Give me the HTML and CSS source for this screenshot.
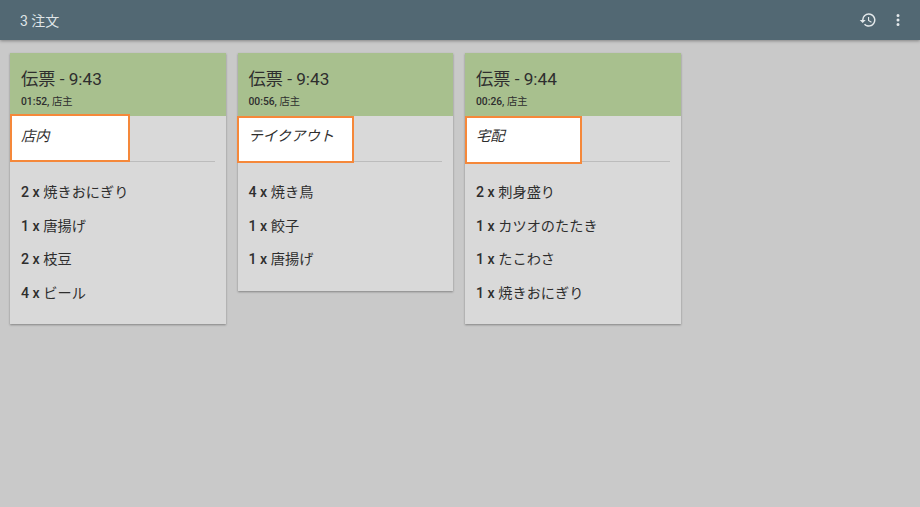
FILE: index.html
```html
<!DOCTYPE html>
<html lang="ja">
<head>
<meta charset="utf-8">
<title>3 注文</title>
<link rel="stylesheet" href="styles.css">
</head>
<body>
<header class="toolbar">
  <div class="title">3 注文</div>
  <div class="actions">
    <svg class="icon" viewBox="0 0 24 24"><path d="M13 3a9 9 0 0 0-9 9H1l3.89 3.89.07.14L9 12H6a7 7 0 1 1 2.05 4.95l-1.42 1.42A9 9 0 1 0 13 3zm-1 5v5l4.28 2.54.72-1.21-3.5-2.08V8H12z"/></svg>
    <svg class="icon" viewBox="0 0 24 24"><path d="M12 8a2 2 0 1 0 0-4 2 2 0 0 0 0 4zm0 2a2 2 0 1 0 0 4 2 2 0 0 0 0-4zm0 6a2 2 0 1 0 0 4 2 2 0 0 0 0-4z"/></svg>
  </div>
</header>
<main class="board">
  <article class="card">
    <div class="card-head">
      <div class="ticket">伝票 - 9:43</div>
      <div class="meta"><b>01:52,</b> 店主</div>
    </div>
    <div class="type">
      <div class="type-box type-box-a">店内</div>
    </div>
    <ul class="items">
      <li><b>2 x</b> 焼きおにぎり</li>
      <li><b>1 x</b> 唐揚げ</li>
      <li><b>2 x</b> 枝豆</li>
      <li><b>4 x</b> ビール</li>
    </ul>
  </article>
  <article class="card">
    <div class="card-head">
      <div class="ticket">伝票 - 9:43</div>
      <div class="meta"><b>00:56,</b> 店主</div>
    </div>
    <div class="type">
      <div class="type-box type-box-b">テイクアウト</div>
    </div>
    <ul class="items">
      <li><b>4 x</b> 焼き鳥</li>
      <li><b>1 x</b> 餃子</li>
      <li><b>1 x</b> 唐揚げ</li>
    </ul>
  </article>
  <article class="card">
    <div class="card-head">
      <div class="ticket">伝票 - 9:44</div>
      <div class="meta"><b>00:26,</b> 店主</div>
    </div>
    <div class="type">
      <div class="type-box type-box-c">宅配</div>
    </div>
    <ul class="items">
      <li><b>2 x</b> 刺身盛り</li>
      <li><b>1 x</b> カツオのたたき</li>
      <li><b>1 x</b> たこわさ</li>
      <li><b>1 x</b> 焼きおにぎり</li>
    </ul>
  </article>
</main>
</body>
</html>
```
FILE: styles.css
```css
* { box-sizing: border-box; }
html, body { height: 100%; }
body {
  margin: 0;
  overflow: hidden;
  background: #c9c9c9;
  color: #2e2e2e;
  font-family: Roboto, "Noto Sans CJK JP", sans-serif;
}
.toolbar {
  height: 40px;
  display: flex;
  align-items: center;
  justify-content: space-between;
  padding: 0 13px 0 20px;
  background: #526873;
  box-shadow: 0 1px 3px rgba(0, 0, 0, .35);
}
.title {
  color: #dfe4e7;
  font-size: 14px;
  font-weight: 400;
}
.actions {
  display: flex;
  align-items: center;
  gap: 12px;
}
.icon {
  width: 18px;
  height: 18px;
  fill: #e4e9eb;
}
.board {
  display: flex;
  align-items: flex-start;
  gap: 12px;
  padding: 13px 10px;
}
.card {
  width: 215.5px;
  background: #d9d9d9;
  box-shadow: 0 1px 2px rgba(0, 0, 0, .35);
}
.card-head {
  height: 63px;
  padding: 15px 11px 0;
  background: #a8c08e;
}
.ticket {
  font-size: 17.2px;
  line-height: 22px;
}
.meta {
  margin-top: 5px;
  font-size: 10.3px;
  line-height: 13px;
}
.meta b { font-weight: 500; }
.type {
  position: relative;
  height: 46px;
  margin: 0 11px;
  border-bottom: 1px solid #bcbcbc;
}
.type-box {
  position: absolute;
  left: -11px;
  top: -2px;
  height: 48px;
  padding: 10px 9px 0;
  background: #fff;
  border: 2px solid #f5883a;
  font-size: 14.3px;
  line-height: 20px;
  font-style: italic;
}
.type-box-a { width: 120px; }
.type-box-b { width: 117px; top: 0; left: -12px; height: 47px; padding-top: 8px; padding-left: 10px; }
.type-box-c { width: 117px; top: 0; height: 48px; padding-top: 8px; }
.items {
  list-style: none;
  margin: 0;
  padding: 14px 11px 13.5px;
}
.items li {
  height: 33.7px;
  font-size: 14.2px;
  line-height: 33.7px;
}
.items b { font-weight: 500; }
```
